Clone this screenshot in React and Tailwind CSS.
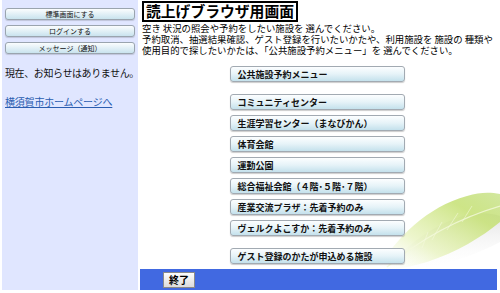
import React from "react";

const jp = { fontFamily: '"Noto Sans CJK JP", "Noto Sans", sans-serif' };

function SideBtn({ children }) {
  return (
    <div className="h-[12px] w-[130px] rounded-[3px] border border-[#9aa4ae] bg-gradient-to-b from-[#fbfdfe] to-[#c9e3ee] shadow-[0_1px_1px_rgba(0,0,0,0.15)] flex items-center justify-center text-[7px] leading-none text-[#111]">
      {children}
    </div>
  );
}

function MainBtn({ children }) {
  return (
    <div className="h-[16px] w-[175px] rounded-[3px] border border-[#a2aab2] bg-gradient-to-b from-[#fcfeff] via-[#e6f3f8] to-[#c4e1ec] shadow-[0_1px_1px_rgba(0,0,0,0.2)] flex items-center pl-[7px] text-[9px] leading-none font-bold text-[#111] whitespace-nowrap">
      {children}
    </div>
  );
}

function Leaf() {
  return (
    <svg className="absolute left-[232px] top-[180px]" width="128" height="90" viewBox="0 0 128 90">
      <defs>
        <linearGradient id="lg" x1="0" y1="1" x2="1" y2="0">
          <stop offset="0" stopColor="#ffffff" stopOpacity="0" />
          <stop offset="0.35" stopColor="#e6f2b8" stopOpacity="0.7" />
          <stop offset="0.75" stopColor="#c8e27a" stopOpacity="0.9" />
          <stop offset="1" stopColor="#b5d860" stopOpacity="0.6" />
        </linearGradient>
        <linearGradient id="sh" x1="0" y1="0" x2="0" y2="1">
          <stop offset="0" stopColor="#d4d4d4" stopOpacity="0.7" />
          <stop offset="1" stopColor="#ffffff" stopOpacity="0" />
        </linearGradient>
      </defs>
      <path d="M10 90 C 30 72, 50 52, 80 40 C 100 32, 115 32, 128 36 L128 62 C 105 74, 80 84, 40 90 Z" fill="url(#sh)" />
      <path d="M5 90 C 25 57, 55 27, 95 16 C 108 12, 118 12, 128 14 L128 42 C 110 57, 85 72, 55 82 C 35 88, 20 90, 5 90 Z" fill="url(#lg)" />
      <path d="M15 87 C 45 62, 80 40, 128 26" stroke="#f4f9dc" strokeWidth="1.2" fill="none" opacity="0.8" />
      <path d="M60 60 L 70 42 M75 50 L 86 33 M90 42 L 100 26 M50 68 L 56 52" stroke="#f4f9dc" strokeWidth="0.8" fill="none" opacity="0.7" />
    </svg>
  );
}

export default function App() {
  return (
    <div className="w-[500px] h-[293px] bg-white flex overflow-hidden" style={jp}>
      <aside className="ml-[2px] w-[136px] h-[290px] bg-[#e0e6ff] flex flex-col items-center pt-[8px]">
        <div className="flex flex-col gap-[5px] items-center">
          <SideBtn>標準画面にする</SideBtn>
          <SideBtn>ログインする</SideBtn>
          <SideBtn>メッセージ（通知）</SideBtn>
        </div>
        <p className="self-start pl-[3px] mt-[12px] text-[10px] tracking-[-0.4px] leading-[14px] text-[#111] whitespace-nowrap">現在、お知らせはありません。</p>
        <a className="self-start pl-[3px] mt-[15px] text-[10px] tracking-[-0.2px] leading-[14px] text-[#2a5db0] underline whitespace-nowrap">横須賀市ホームページへ</a>
      </aside>
      <main className="relative ml-[2px] w-[357px] h-[290px] flex flex-col">
        <Leaf />
        <div className="relative flex flex-col flex-1">
          <div className="ml-[2px] mt-[1px] self-start border-2 border-black px-[2px] h-[21px] flex items-center text-[14.8px] font-bold leading-none text-black">
            読上げブラウザ用画面
          </div>
          <div className="ml-[2px] mt-[1px] text-[9.4px] text-black whitespace-nowrap">
            <div className="h-[11px] leading-[11px]">空き 状況の照会や予約をしたい施設を 選んでください。</div>
            <div className="h-[11px] leading-[11px]">予約取消、抽選結果確認、ゲスト登録を行いたいかたや、利用施設を 施設の 種類や</div>
            <div className="h-[11px] leading-[11px]">使用目的で探したいかたは、「公共施設予約メニュー」を 選んでください。</div>
          </div>
          <div className="flex flex-col items-center mt-[10px] ml-[-3px]">
            <MainBtn>公共施設予約メニュー</MainBtn>
            <div className="flex flex-col gap-[5px] mt-[12px]">
              <MainBtn>コミュニティセンター</MainBtn>
              <MainBtn>生涯学習センター（まなびかん）</MainBtn>
              <MainBtn>体育会館</MainBtn>
              <MainBtn>運動公園</MainBtn>
              <MainBtn>総合福祉会館（４階･５階･７階）</MainBtn>
              <MainBtn>産業交流プラザ：先着予約のみ</MainBtn>
              <MainBtn>ヴェルクよこすか：先着予約のみ</MainBtn>
            </div>
            <div className="mt-[12px]">
              <MainBtn>ゲスト登録のかたが申込める施設</MainBtn>
            </div>
          </div>
        </div>
        <div className="relative mt-auto h-[21px] bg-[#4169e1] flex items-center pl-[23px]">
          <div className="h-[16px] w-[32px] border border-[#8a8a8a] bg-gradient-to-b from-[#fdfdfd] to-[#dcdcdc] flex items-center justify-center text-[10px] font-bold leading-none text-black">
            終了
          </div>
        </div>
      </main>
    </div>
  );
}
